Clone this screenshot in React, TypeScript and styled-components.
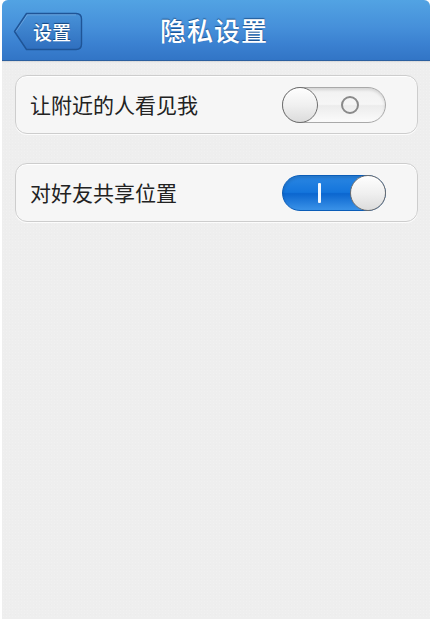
import React, { useState } from "react";
import styled, { createGlobalStyle } from "styled-components";

const Global = createGlobalStyle`
  html, body { margin: 0; padding: 0; background: #ffffff; }
  body { font-family: "Noto Sans CJK SC", "Noto Sans", sans-serif; }
  * { box-sizing: border-box; }
`;

const Frame = styled.div`
  width: 433px;
  height: 621px;
  padding: 0 3px 2px 2px;
  background: #ffffff;
  display: flex;
`;

const Screen = styled.div`
  flex: 1;
  display: flex;
  flex-direction: column;
  border-radius: 6px 6px 0 0;
  overflow: hidden;
  background-color: #eeeeee;
  background-image:
    radial-gradient(rgba(255, 255, 255, 0.18) 0.6px, transparent 0.8px),
    radial-gradient(rgba(0, 0, 0, 0.012) 0.6px, transparent 0.8px);
  background-size: 3px 3px, 5px 5px;
  background-position: 0 0, 1px 2px;
`;

const NavBar = styled.header`
  height: 61px;
  flex-shrink: 0;
  display: grid;
  grid-template-columns: 1fr auto 1fr;
  align-items: center;
  padding: 0 11px;
  background: linear-gradient(180deg, #52a3e3 0%, #4690da 45%, #3a80d0 75%, #3275c6 100%);
  border-bottom: 1px solid #2b5f9f;
  box-shadow: 0 1px 1px rgba(0, 0, 0, 0.08);
`;

const BackButton = styled.button`
  position: relative;
  justify-self: start;
  width: 70px;
  height: 39px;
  margin-top: 2px;
  padding: 0 0 0 8px;
  border: none;
  background: none;
  display: flex;
  align-items: center;
  justify-content: center;
  font-family: "Noto Sans CJK SC", sans-serif;
  font-size: 19px;
  font-weight: 500;
  color: #ffffff;
  text-shadow: 0 -1px 1px rgba(0, 40, 90, 0.7);
  cursor: pointer;
`;

const BackShape = styled.svg`
  position: absolute;
  inset: 0;
  width: 100%;
  height: 100%;
`;

const BackLabel = styled.span`
  position: relative;
  line-height: 1;
`;

const Title = styled.h1`
  margin: 0 0 0 -4px;
  font-size: 26px;
  font-weight: 500;
  line-height: 1;
  color: #ffffff;
  letter-spacing: 1px;
  text-shadow: 0 -1px 1px rgba(0, 40, 90, 0.6);
  font-family: "Noto Sans CJK SC", sans-serif;
`;

const Content = styled.main`
  display: flex;
  flex-direction: column;
  gap: 29px;
  padding: 14px 12px 0 13px;
`;

const Card = styled.section`
  height: 59px;
  display: flex;
  align-items: center;
  justify-content: space-between;
  padding: 0 31px 0 14px;
  background: #f6f6f6;
  border: 1px solid #cdcdcd;
  border-radius: 12px;
  box-shadow: inset 0 1px 0 #ffffff, 0 1px 0 rgba(255, 255, 255, 0.8);
`;

const Label = styled.span`
  font-size: 21px;
  font-weight: 400;
  color: #222222;
  line-height: 1;
  margin-top: -1px;
`;

const Track = styled.button<{ $on: boolean }>`
  position: relative;
  width: 104px;
  height: 36px;
  padding: 0;
  border-radius: 18px;
  cursor: pointer;
  display: flex;
  align-items: center;
  justify-content: ${(p) => (p.$on ? "flex-end" : "flex-start")};
  border: 1px solid ${(p) => (p.$on ? "#0b5db8" : "#a9a9a9")};
  background: ${(p) =>
    p.$on
      ? "linear-gradient(180deg, #2a86e2 0%, #1475dc 48%, #0b66cf 52%, #3a92e8 100%)"
      : "linear-gradient(180deg, #f1f1f1 0%, #f6f6f6 48%, #ececec 52%, #fbfbfb 100%)"};
  box-shadow: inset 0 2px 3px rgba(0, 0, 0, 0.12);
`;

const Mark = styled.span<{ $on: boolean }>`
  position: absolute;
  top: 50%;
  left: ${(p) => (p.$on ? "35px" : "58px")};
  transform: translateY(-50%);
  width: ${(p) => (p.$on ? "3px" : "18px")};
  height: ${(p) => (p.$on ? "20px" : "18px")};
  border-radius: ${(p) => (p.$on ? "1px" : "50%")};
  background: ${(p) => (p.$on ? "#f2f8ff" : "transparent")};
  border: ${(p) => (p.$on ? "none" : "2.5px solid #8a8a8a")};
`;

const Knob = styled.span`
  position: relative;
  width: 36px;
  height: 36px;
  margin: -1px;
  border-radius: 50%;
  border: 1.5px solid #6f6f6f;
  background: linear-gradient(180deg, #fefefe 0%, #f0f0f0 50%, #dcdcdc 100%);
  box-shadow: inset 0 1px 0 #ffffff;
`;

function Toggle({ initial }: { initial: boolean }) {
  const [on, setOn] = useState(initial);
  return (
    <Track $on={on} onClick={() => setOn(!on)} aria-pressed={on}>
      <Mark $on={on} />
      <Knob />
    </Track>
  );
}

export default function App() {
  return (
    <>
      <Global />
      <Frame>
        <Screen>
          <NavBar>
            <BackButton>
              <BackShape viewBox="0 0 70 39" preserveAspectRatio="none">
                <defs>
                  <linearGradient id="backFill" x1="0" y1="0" x2="0" y2="1">
                    <stop offset="0" stopColor="#4892d8" />
                    <stop offset="1" stopColor="#2f6fbf" />
                  </linearGradient>
                </defs>
                <path
                  d="M1.5 19.5 L13.5 1.5 H63 Q68.5 1.5 68.5 7 V32 Q68.5 37.5 63 37.5 H13.5 Z"
                  fill="url(#backFill)"
                  stroke="#1f5496"
                  strokeWidth="1.4"
                  strokeLinejoin="round"
                />
                <path
                  d="M3 19.5 L14.3 2.8 H63"
                  fill="none"
                  stroke="rgba(255,255,255,0.25)"
                  strokeWidth="0.8"
                />
              </BackShape>
              <BackLabel>设置</BackLabel>
            </BackButton>
            <Title>隐私设置</Title>
            <span />
          </NavBar>
          <Content>
            <Card>
              <Label>让附近的人看见我</Label>
              <Toggle initial={false} />
            </Card>
            <Card>
              <Label>对好友共享位置</Label>
              <Toggle initial={true} />
            </Card>
          </Content>
        </Screen>
      </Frame>
    </>
  );
}
